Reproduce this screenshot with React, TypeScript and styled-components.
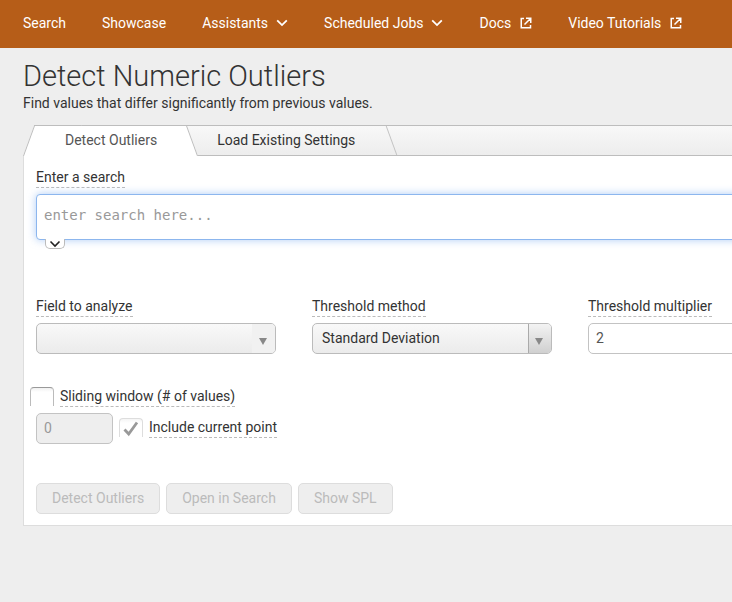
import React from "react";
import styled, { createGlobalStyle, css } from "styled-components";

const GlobalStyle = createGlobalStyle`
  *, *::before, *::after { box-sizing: border-box; }
  body {
    margin: 0;
    background: #eeeeee;
    color: #333333;
    font: 14px/20px Roboto, "Liberation Sans", sans-serif;
  }
  button, input, select, textarea { font: inherit; margin: 0; }
`;

const Page = styled.div`
  overflow: hidden;
`;

const NavBar = styled.nav`
  display: flex;
  align-items: center;
  gap: 36px;
  height: 48px;
  padding: 0 23px;
  padding-bottom: 2px;
  background: #b65d18;
  white-space: nowrap;
`;

const NavLink = styled.a`
  display: flex;
  align-items: center;
  color: #ffffff;
  text-decoration: none;
`;

const NavIcon = styled.svg<{ $gap: number }>`
  flex: none;
  margin-left: ${(p) => p.$gap}px;
  fill: none;
  stroke: currentColor;
`;

const Main = styled.main`
  min-width: 852px;
  padding: 12px 0 24px 23px;
`;

const Title = styled.h1`
  margin: 0;
  font-size: 29px;
  line-height: 33px;
  font-weight: 300;
`;

const Description = styled.p`
  margin: 0 0 12px;
  line-height: 20px;
`;

const TabBar = styled.div`
  display: flex;
  height: 31px;
`;

const raised = css`
  border: solid #bdbdbd;
  border-width: 1px 0;
  background: linear-gradient(#f8f8f8, #ededed);
`;

const slant = css`
  content: "";
  position: absolute;
  z-index: -1;
`;

const Tab = styled.button<{ $active?: boolean }>`
  position: relative;
  z-index: 0;
  height: 31px;
  line-height: 20px;
  white-space: nowrap;
  ${(p) =>
    p.$active
      ? css`
          z-index: 1;
          border: 0;
          padding: 0 41px 2px 42px;
          background: none;
          color: #555555;
          &::before,
          &::after {
            ${slant}
            top: 0;
            bottom: 0;
            border-top: 1px solid #bdbdbd;
            background: #ffffff;
          }
          &::before {
            left: 0;
            width: 60%;
            border-left: 1px solid #bdbdbd;
            transform: skewX(-20deg);
            transform-origin: bottom;
          }
          &::after {
            right: 0;
            width: 60%;
            border-right: 1px solid #bdbdbd;
            transform: skewX(20deg);
            transform-origin: bottom;
          }
        `
      : css`
          ${raised}
          margin-left: -11px;
          padding: 0 42px 2px 30px;
          color: #333333;
          &::after {
            ${slant}
            top: 0;
            bottom: 0;
            right: 5px;
            border-right: 1px solid #c3c3c3;
            transform: skewX(20deg);
          }
        `}
`;

const TabFill = styled.div`
  ${raised}
  flex: 1;
`;

const Panel = styled.section`
  padding: 11px 12px;
  border: solid #dddddd;
  border-width: 0 0 1px 1px;
  background: #ffffff;
`;

const Hint = styled.label`
  display: inline-block;
  line-height: 20px;
  border-bottom: 1px dashed #bbbbbb;
  white-space: nowrap;
`;

const Field = styled.div`
  display: flex;
  flex-direction: column;
  align-items: flex-start;
  gap: 6px;
`;

const SearchBox = styled.div`
  position: relative;
  width: 100%;
`;

const SearchInput = styled.textarea`
  display: block;
  width: 100%;
  height: 46px;
  padding: 10px 7px;
  border: 1px solid #8cb6ee;
  border-radius: 4px;
  box-shadow: 0 0 8px rgba(120, 170, 240, 0.6);
  outline: none;
  resize: none;
  overflow: hidden;
  font-family: "DejaVu Sans Mono", "Liberation Mono", monospace;
  line-height: 20px;
  &::placeholder { color: #999999; opacity: 1; }
`;

const ExpandButton = styled.button`
  position: absolute;
  bottom: -9px;
  left: 9px;
  display: grid;
  place-items: center;
  width: 20px;
  height: 10px;
  padding: 0;
  border: 1px solid #bbbbbb;
  border-top: 0;
  border-radius: 0 0 5px 5px;
  background: #ffffff;
  svg { fill: none; stroke: #222222; }
`;

const FieldGrid = styled.div`
  display: grid;
  grid-template-columns: repeat(3, 240px);
  gap: 36px;
  margin-top: 56px;
`;

const SelectBox = styled.div<{ $muted?: boolean }>`
  position: relative;
  width: 100%;
  &::before {
    content: "";
    position: absolute;
    top: 1px;
    right: 1px;
    bottom: 1px;
    width: 23px;
    border-radius: 0 4px 4px 0;
    pointer-events: none;
    ${(p) =>
      p.$muted
        ? css`background: #f1f1f1;`
        : css`
            border-left: 1px solid #aaaaaa;
            background: linear-gradient(#f3f3f3, #d0d0d0);
          `}
  }
  &::after {
    content: "";
    position: absolute;
    top: 15px;
    right: 9px;
    border: solid transparent;
    border-width: 7px 4px 0;
    border-top-color: #888888;
    pointer-events: none;
  }
`;

const Select = styled.select`
  display: block;
  appearance: none;
  width: 100%;
  height: 31px;
  padding: 0 30px 2px 9px;
  border: 1px solid #bbbbbb;
  border-radius: 5px;
  background: linear-gradient(#f9f9f9, #ebebeb);
  color: #333333;
`;

const TextInput = styled.input<{ $short?: boolean }>`
  width: ${(p) => (p.$short ? "77px" : "100%")};
  height: 31px;
  padding: 0 7px 2px;
  border: 1px solid #c3c3c3;
  border-radius: 5px;
  background: #ffffff;
  color: #555555;
  &:disabled {
    background: #eeeeee;
    color: #999999;
  }
`;

const WindowOptions = styled.div`
  margin-top: 32px;
`;

const OptionRow = styled.div<{ $outdent?: boolean }>`
  display: flex;
  align-items: center;
  gap: 6px;
  margin-left: ${(p) => (p.$outdent ? "-6px" : "0")};
`;

const WindowRow = styled(OptionRow)`
  align-items: flex-start;
  margin-top: 6px;
`;

const CheckLine = styled.div`
  display: flex;
  align-items: center;
  gap: 6px;
  padding-top: 4px;
`;

const CheckCell = styled.span`
  position: relative;
  flex: none;
  width: 24px;
  height: 19px;
  svg {
    position: absolute;
    inset: 0;
    fill: none;
    stroke: #999999;
    pointer-events: none;
  }
`;

const Checkbox = styled.input`
  display: block;
  appearance: none;
  width: 24px;
  height: 19px;
  border: 1px solid #bbbbbb;
  border-top-color: #999999;
  border-bottom: 0;
  border-radius: 4px 4px 0 0;
  background: linear-gradient(#f1f1f1, #ffffff 4px);
  &:disabled {
    border-color: #dddddd;
    background: linear-gradient(#f5f5f5, #ffffff 4px);
  }
`;

const Actions = styled.div`
  display: flex;
  gap: 6px;
  margin-top: 39px;
`;

const ActionButton = styled.button`
  height: 31px;
  padding: 0 15px 2px;
  border: 1px solid #dddddd;
  border-radius: 5px;
  background: #eeeeee;
  white-space: nowrap;
  &:disabled { color: #bbbbbb; }
`;

type NavKind = "plain" | "menu" | "external";

const navItems: { label: string; kind: NavKind }[] = [
  { label: "Search", kind: "plain" },
  { label: "Showcase", kind: "plain" },
  { label: "Assistants", kind: "menu" },
  { label: "Scheduled Jobs", kind: "menu" },
  { label: "Docs", kind: "external" },
  { label: "Video Tutorials", kind: "external" },
];

function NavGlyph({ kind }: { kind: NavKind }) {
  if (kind === "menu") {
    return (
      <NavIcon $gap={8} width="12" height="8" viewBox="0 0 12 8" strokeWidth="1.8" aria-hidden="true">
        <path d="M1.2 1.3 6 6.1l4.8-4.8" />
      </NavIcon>
    );
  }
  if (kind === "external") {
    return (
      <NavIcon $gap={9} width="12" height="12" viewBox="0 0 12 12" strokeWidth="1.5" aria-hidden="true">
        <path d="M4 1.5H1.25v9.25h9.25V8M6 1.25h4.75V6M10.5 1.5 4.5 7.5" />
      </NavIcon>
    );
  }
  return null;
}

export default function App() {
  return (
    <Page>
      <GlobalStyle />
      <NavBar>
        {navItems.map((item) => (
          <NavLink key={item.label} href="#">
            {item.label}
            <NavGlyph kind={item.kind} />
          </NavLink>
        ))}
      </NavBar>
      <Main>
        <Title>Detect Numeric Outliers</Title>
        <Description>Find values that differ significantly from previous values.</Description>
        <TabBar role="tablist">
          <Tab $active role="tab" aria-selected="true">Detect Outliers</Tab>
          <Tab role="tab" aria-selected="false">Load Existing Settings</Tab>
          <TabFill />
        </TabBar>
        <Panel>
          <Field>
            <Hint htmlFor="search">Enter a search</Hint>
            <SearchBox>
              <SearchInput id="search" placeholder="enter search here..." />
              <ExpandButton aria-label="Expand search">
                <svg width="12" height="8" viewBox="0 0 12 8" strokeWidth="1.6">
                  <path d="M1.5 1.5 6 6l4.5-4.5" />
                </svg>
              </ExpandButton>
            </SearchBox>
          </Field>
          <FieldGrid>
            <Field>
              <Hint htmlFor="field">Field to analyze</Hint>
              <SelectBox $muted>
                <Select id="field" defaultValue="">
                  <option value=""></option>
                </Select>
              </SelectBox>
            </Field>
            <Field>
              <Hint htmlFor="method">Threshold method</Hint>
              <SelectBox>
                <Select id="method">
                  <option>Standard Deviation</option>
                </Select>
              </SelectBox>
            </Field>
            <Field>
              <Hint htmlFor="multiplier">Threshold multiplier</Hint>
              <TextInput id="multiplier" defaultValue="2" />
            </Field>
          </FieldGrid>
          <WindowOptions>
            <OptionRow $outdent>
              <CheckCell>
                <Checkbox id="sliding" type="checkbox" />
              </CheckCell>
              <Hint htmlFor="sliding">Sliding window (# of values)</Hint>
            </OptionRow>
            <WindowRow>
              <TextInput $short aria-label="Number of values" defaultValue="0" disabled />
              <CheckLine>
                <CheckCell>
                  <Checkbox id="current" type="checkbox" defaultChecked disabled />
                  <svg width="24" height="19" viewBox="0 0 24 19" strokeWidth="2.8">
                    <path d="M5.5 11.5 9.7 16 18 4.5" />
                  </svg>
                </CheckCell>
                <Hint htmlFor="current">Include current point</Hint>
              </CheckLine>
            </WindowRow>
          </WindowOptions>
          <Actions>
            <ActionButton disabled>Detect Outliers</ActionButton>
            <ActionButton disabled>Open in Search</ActionButton>
            <ActionButton disabled>Show SPL</ActionButton>
          </Actions>
        </Panel>
      </Main>
    </Page>
  );
}
